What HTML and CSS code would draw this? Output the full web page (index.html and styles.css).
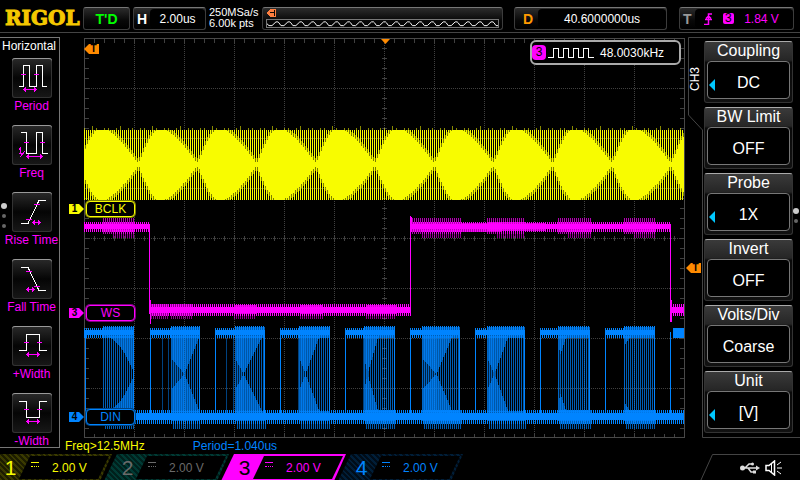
FILE: index.html
```html
<!DOCTYPE html>
<html lang="en">
<head>
<meta charset="utf-8">
<title>RIGOL oscilloscope</title>
<link rel="stylesheet" href="styles.css">
</head>
<body>
<svg class="defs" aria-hidden="true">
  <symbol id="flag" viewBox="0 0 15 10"><path fill="currentColor" d="M0 0H10L15 5L10 10H0Z"/></symbol>
  <symbol id="flag-left" viewBox="0 0 15 10"><path fill="currentColor" d="M15 0H5L0 5L5 10H15Z"/></symbol>
</svg>

<header class="topbar">
  <div class="logo">RIGOL</div>
  <button class="panel status">T'D</button>
  <button class="panel timebase"><b>H</b><span class="well">2.00us</span></button>
  <div class="sampling">250MSa/s<br>6.00k pts</div>
  <div class="panel memory">
    <svg class="memory-mark" viewBox="0 0 10 8" shape-rendering="crispEdges"><path d="M0 4L4 0H10V8H4Z" fill="#ff7f40"/><path d="M4 3.500H8M8.500 1V7" fill="none" stroke="#000"/></svg>
    <svg class="memory-wave" id="memory-wave" viewBox="0 0 232 8" preserveAspectRatio="none"></svg>
  </div>
  <button class="panel delay"><b>D</b><span class="well">40.6000000us</span></button>
  <button class="panel trigger"><b>T</b><span class="well">
    <svg class="edge" viewBox="0 0 9 12"><path d="M0 11.500H4.500V1H8M1 6.500H8M2 5.500L4.500 3L7 5.500" fill="none" stroke="currentColor" stroke-width="1.500"/></svg>
    <span class="source">3</span><span>1.84 V</span></span></button>
</header>

<main class="scope">
  <nav class="measures" aria-label="Horizontal measurements">
    <h2>Horizontal</h2>
    <span class="pager"><i></i><i></i><i></i></span>
    <button><svg viewBox="0 0 40 40"><path class="sig" d="M7 28.500H11.500V7.500H17.500V28.500H24.500V7.500H30.500V28.500H35"/><path class="mark" d="M9 16.500H14M22 16.500H27M12 31.500H24"/><path class="head" d="M11 31.500L14 29V34ZM25 31.500L22 29V34Z"/></svg><span>Period</span></button>
    <button><svg viewBox="0 0 40 40"><path class="sig" d="M9 7.500H14.500V28.500H24.500V7.500H30.500V28.500H36"/><path class="mark" d="M12 17.500H17M28 17.500H33M15 31.500H30M7 24.500L8.500 23V28M7 28.500H10M8 32L13 26"/><path class="head" d="M14 31.500L17 29V34ZM31 31.500L28 29V34Z"/></svg><span>Freq</span></button>
    <button><svg viewBox="0 0 40 40"><path class="sig" d="M9 31.500H16L27 8.500H34"/><path class="mark" d="M22 12.500H28M14 27.500H20M20 30.500H29"/><path class="head" d="M20 30.500L23 28V33ZM29 30.500L26 28V33Z"/></svg><span>Rise Time</span></button>
    <button><svg viewBox="0 0 40 40"><path class="sig" d="M9 8.500H16L27 31.500H34"/><path class="mark" d="M14 12.500H20M22 27.500H28M14 30.500H22"/><path class="head" d="M14 30.500L17 28V33ZM23 30.500L20 28V33Z"/></svg><span>Fall Time</span></button>
    <button><svg viewBox="0 0 40 40"><path class="sig" d="M7 24.500H14.500V8.500H27.500V24.500H35"/><path class="mark" d="M12 16.500H17M25 16.500H30M15 28.500H27"/><path class="head" d="M14 28.500L17 26V31ZM28 28.500L25 26V31Z"/></svg><span>+Width</span></button>
    <button><svg viewBox="0 0 40 40"><path class="sig" d="M7 8.500H14.500V24.500H27.500V8.500H35"/><path class="mark" d="M12 16.500H17M25 16.500H30M15 28.500H27"/><path class="head" d="M14 28.500L17 26V31ZM28 28.500L25 26V31Z"/></svg><span>-Width</span></button>
  </nav>

  <section class="display">
    <div class="plot">
      <svg id="graph" class="graph" viewBox="84 38 601 400" shape-rendering="crispEdges" role="img" aria-label="Waveforms"></svg>
      <span class="marker trigger-pos"><svg><use href="#flag-left"/></svg><b>T</b></span>
      <svg class="center-mark" viewBox="0 0 9 5"><path d="M0 0H9L4.500 5Z" fill="#ff8a00"/></svg>
      <div class="freq-counter"><span class="source">3</span>
        <svg viewBox="0 0 46 12" shape-rendering="crispEdges"><path d="M0 10.500H5.500V1.500H10.500V10.500H15.500V1.500H20.500V10.500H25.500V1.500H30.500V10.500H35.500V1.500H40.500V10.500H46" fill="none" stroke="#fff"/></svg>
        <span>48.0030kHz</span></div>
      <span class="marker zero ch1"><svg><use href="#flag"/></svg><b>1</b></span>
      <span class="marker zero ch3"><svg><use href="#flag"/></svg><b>3</b></span>
      <span class="marker zero ch4"><svg><use href="#flag"/></svg><b>4</b></span>
      <span class="tag ch1">BCLK</span>
      <span class="tag ch3">WS</span>
      <span class="tag ch4">DIN</span>
    </div>
    <div class="readouts"><span class="ch1">Freq&gt;12.5MHz</span><span class="ch4">Period=1.040us</span></div>
  </section>

  <aside class="menu">
    <svg class="outline" viewBox="0 0 115 401"><path d="M115 0.500H3.500V78L17.500 93V400.500H115" fill="none" stroke="#444"/></svg>
    <h2 class="menu-tab">CH3</h2>
    <span class="marker level"><svg><use href="#flag-left"/></svg><b>T</b></span>
    <button><span>Coupling</span><span class="value more">DC</span></button>
    <button><span>BW Limit</span><span class="value">OFF</span></button>
    <button><span>Probe</span><span class="value more">1X</span></button>
    <button><span>Invert</span><span class="value">OFF</span></button>
    <button><span>Volts/Div</span><span class="value">Coarse</span></button>
    <button><span>Unit</span><span class="value more">[V]</span></button>
    <span class="pager"><i></i><i></i></span>
  </aside>
</main>

<footer class="channels">
  <button class="channel ch1"><b>1</b><span class="scale"><i class="dc"></i>2.00 V</span></button>
  <button class="channel ch2"><b>2</b><span class="scale"><i class="dc"></i>2.00 V</span></button>
  <button class="channel ch3 active"><b>3</b><span class="scale"><i class="dc"></i>2.00 V</span></button>
  <button class="channel ch4"><b>4</b><span class="scale"><i class="dc"></i>2.00 V</span></button>
  <div class="system">
    <svg class="slant" viewBox="0 0 100 27"><path d="M0.500 27L12.500 0.500H100" fill="none" stroke="#444"/></svg>
    <svg class="usb" viewBox="0 0 20 12"><g fill="none" stroke="#ddd" stroke-width="1.500"><path d="M2 6H17M5 6L9 2H12M8 6L11 10H14"/></g><g fill="#ddd"><circle cx="2.500" cy="6" r="2.500"/><path d="M16 3.500L20 6L16 8.500Z"/><circle cx="12.500" cy="2" r="1.500"/><path d="M13 8.500H16V11.500H13Z"/></g></svg>
    <svg class="speaker" viewBox="0 0 18 16"><g fill="none" stroke="#fff"><path d="M1 5.500H4L9.500 1V15L4 10.500H1Z" stroke-width="1.500"/><path d="M6.500 4V12M12 5L16 2M12 8H17M12 11L16 14"/></g></svg>
  </div>
</footer>
<script src="scope.js"></script>
</body>
</html>
```
FILE: styles.css
```css
* { box-sizing: border-box; }

:root {
  --ch1: #f8fc00;
  --ch2: #6a6a6a;
  --ch3: #ff00ff;
  --ch4: #0084ff;
  --line: #444;
  --orange: #ff8a00;
}

body {
  margin: 0;
  min-height: 100vh;
  display: flex;
  flex-direction: column;
  background: #000;
  color: #fff;
  font: 12px/14px "Liberation Sans", Arial, sans-serif;
  overflow: hidden;
}

button {
  font: inherit;
  color: inherit;
  background: none;
  border: 0;
  padding: 0;
}

h2 { margin: 0; font: inherit; }
svg { display: block; }
.defs { position: absolute; width: 0; height: 0; }

.ch1 { color: var(--ch1); }
.ch2 { color: var(--ch2); }
.ch3 { color: var(--ch3); }
.ch4 { color: var(--ch4); }

/* Top bar */
.topbar {
  height: 33px;
  display: flex;
  align-items: flex-start;
  padding: 7px 6px 0 5px;
  border-bottom: 1px solid var(--line);
}
.logo {
  width: 78px;
  font: bold 20px/22px "DejaVu Serif", serif;
  color: #f5c800;
  -webkit-text-stroke: 1px #f5c800;
}
.panel {
  height: 23px;
  display: flex;
  align-items: center;
  border: 1px solid #3c3c3c;
  border-top-color: #777;
  border-radius: 3px;
  background: linear-gradient(#2c2c2c, #080808 60%, #000);
}
.status {
  width: 47px;
  justify-content: center;
  margin-right: 3px;
  color: #0f0;
  font-weight: bold;
  font-size: 14px;
}
.panel b { font-size: 14px; padding-left: 3px; }
.well {
  flex: 1;
  height: 19px;
  display: flex;
  align-items: center;
  justify-content: center;
  border-radius: 4px;
  background: #000;
}
.timebase { width: 73px; margin-right: 3px; }
.timebase .well { margin-left: 3px; }
.sampling { width: 53px; font-size: 11px; line-height: 11px; white-space: nowrap; }
.memory {
  flex: 1;
  flex-direction: column;
  align-items: stretch;
  padding: 1px 3px;
  margin-right: 11px;
}
.memory-mark { width: 10px; height: 8px; margin-bottom: 2px; }
.memory-wave { width: 100%; height: 10px; border: 1px solid #777; }
.delay { width: 153px; margin-right: 12px; }
.delay b { color: #ff9a00; padding: 0 5px 0 8px; }
.trigger { width: 115px; }
.trigger b { color: #999; margin-right: 3px; }
.trigger .well { color: var(--ch3); justify-content: space-around; padding: 0 9px 0 4px; }
.edge { width: 9px; height: 12px; }
.trigger .source {
  width: 11px;
  height: 11px;
  line-height: 11px;
  border-radius: 2px;
  background: var(--ch3);
  color: #000;
  text-align: center;
}

/* Work area */
.scope {
  flex: 1;
  display: grid;
  grid-template-columns: 60px 1fr 115px;
  align-items: start;
}

.measures {
  position: relative;
  margin-top: 4px;
  height: 411px;
  padding-left: 4px;
  border: 1px solid #777;
  border-left: 0;
}
.measures h2 { height: 20px; line-height: 17px; margin-left: -2px; }
.measures button {
  width: 100%;
  height: 67px;
  display: flex;
  flex-direction: column;
  align-items: center;
  white-space: nowrap;
  color: var(--ch3);
}
.measures button svg {
  width: 40px;
  height: 40px;
  margin-bottom: 1px;
  border-radius: 3px;
  box-shadow: inset 0 1px #999, inset 0 0 0 1px #333;
  background: linear-gradient(#2a2a2a, #050505 50%, #181818);
  shape-rendering: crispEdges;
}
.sig { fill: none; stroke: #fff; }
.mark { fill: none; stroke: var(--ch3); }
.head { fill: var(--ch3); stroke: none; }

.pager {
  position: absolute;
  display: flex;
  flex-direction: column;
  align-items: center;
  gap: 6px;
  width: 6px;
}
.pager i { width: 4px; height: 4px; border-radius: 50%; background: #666; }
.pager i:first-child { width: 6px; height: 6px; margin-bottom: -1px; background: #ccc; }
.measures .pager { left: 1px; top: 165px; }
.menu .pager { right: 1px; top: 171px; }

/* Plot */
.display { padding: 5px 0 0 24px; }
.plot { position: relative; }
.graph { width: 100%; }

.marker {
  position: absolute;
  width: 15px;
  height: 10px;
}
.marker svg { width: 15px; height: 10px; }
.marker b {
  position: absolute;
  inset: 0 4px 0 0;
  color: #000;
  font-size: 10px;
  line-height: 10px;
  text-align: center;
}
.trigger-pos { left: 0; top: 6px; color: var(--orange); }
.trigger-pos b, .level b { inset: 0 0 0 4px; }
.level { left: 1px; top: 226px; color: var(--orange); }
.zero { left: -15px; }
.zero.ch1, .tag.ch1 { top: 166px; }
.zero.ch3, .tag.ch3 { top: 270px; }
.zero.ch4, .tag.ch4 { top: 374px; }

.center-mark { position: absolute; left: calc(50% - 4px); top: 1px; width: 9px; height: 5px; }

.tag {
  position: absolute;
  left: 2px;
  width: 49px;
  height: 16px;
  margin-top: -3px;
  border: 1px solid;
  border-radius: 4px;
  box-shadow: 0 0 0 1px color-mix(in srgb, currentColor 50%, #000);
  background: #000;
  text-align: center;
  line-height: 15px;
}

.freq-counter {
  position: absolute;
  right: 4px;
  top: 2px;
  width: 151px;
  height: 25px;
  display: flex;
  align-items: center;
  border: 2px solid #aaa;
  border-radius: 6px;
  background: #000;
}
.freq-counter .source {
  width: 14px;
  height: 15px;
  margin-right: 2px;
  line-height: 15px;
  border-radius: 4px;
  background: var(--ch3);
  color: #000;
  text-align: center;
}
.freq-counter svg { width: 46px; height: 12px; margin-right: 6px; }

.readouts { display: flex; gap: 48px; margin-left: -19px; line-height: 16px; }

/* Soft-key menu */
.menu {
  position: relative;
  margin-top: 4px;
  padding: 4px 7px 0 19px;
  display: flex;
  flex-direction: column;
  gap: 4px;
  font-size: 16px;
}
.outline { position: absolute; left: 0; top: 0; width: 115px; height: 401px; }
.menu-tab {
  position: absolute;
  left: 4px;
  top: 30px;
  font-size: 12px;
  line-height: 12px;
  writing-mode: vertical-rl;
  transform: rotate(180deg);
}
.menu button {
  position: relative;
  height: 62px;
  padding: 0 3px;
  border: 1px solid #333;
  border-top-color: #aaa;
  border-radius: 3px;
  background: linear-gradient(#3a3a3a, #262626 30%, #0a0a0a 34%, #111);
}
.menu button span { display: block; height: 18px; line-height: 18px; }
.menu button .value {
  height: 38px;
  margin: 1px -1px 3px;
  line-height: 42px;
  border: 1px solid #777;
  border-radius: 4px;
  background: #000;
}
.more::before {
  content: "";
  position: absolute;
  left: 4px;
  top: 37px;
  border: solid transparent;
  border-width: 6px 6px 6px 0;
  border-right-color: #00c8ff;
}

/* Channel strip */
.channels {
  height: 27px;
  display: flex;
  margin-left: -13px;
}
.channel {
  width: 125px;
  margin-right: -8px;
  padding: 2px 3px 2px 15px;
  display: flex;
  align-items: center;
  clip-path: polygon(13px 0, 100% 0, calc(100% - 12px) 100%, 0 100%);
  background: repeating-linear-gradient(45deg, var(--base) 0 2px, var(--tint) 2px 4px);
}
.channel.ch1 { --base: #1c1c00; --tint: #3a3a00; }
.channel.ch2 { --base: #00201c; --tint: #003a34; }
.channel.ch4 { --base: #000c18; --tint: #001e38; }
.channel.active { background: var(--ch3); }
.channel b { width: 17px; font-weight: normal; font-size: 21px; }
.channel.active b { color: #000; }
.scale {
  flex: 1;
  height: 23px;
  display: flex;
  align-items: center;
  gap: 13px;
  padding-left: 12px;
  clip-path: polygon(11px 0, 100% 0, calc(100% - 11px) 100%, 0 100%);
  background: #000;
}
.dc {
  width: 8px;
  height: 5px;
  margin-bottom: 6px;
  border-top: 1px solid;
  border-bottom: 1px dotted;
}
.system {
  position: relative;
  flex: 1;
  display: flex;
  align-items: center;
  justify-content: flex-end;
  gap: 5px;
  padding-right: 17px;
}
.slant { position: absolute; right: 0; top: 0; width: 100px; height: 27px; }
.usb { width: 20px; height: 12px; }
.speaker { width: 18px; height: 16px; }
```
FILE: scope.js
```js
const graph = document.getElementById("graph");
const parts = [];

function path(d, color, opacity = 1) {
  parts.push(`<path d="${d}" fill="${color}" fill-opacity="${opacity}"/>`);
}
const box = (x, y, w, h) => `M${x} ${y}h${w}v${h}h${-w}z`;

// Comb of one-pixel columns between two heights
function comb(x0, x1, top, bottom, step = 2) {
  let d = "";
  for (let x = x0; x < x1; x += step) {
    const t = typeof top === "function" ? top(x) : top;
    const b = typeof bottom === "function" ? bottom(x) : bottom;
    if (b > t) d += box(x, Math.round(t), 1, Math.round(b - t));
  }
  return d;
}

// Graticule: dotted divisions, ticks every fifth of a division
let grid = "";
for (let x = 134; x < 684; x += 50) {
  for (let y = 39; y < 437; y += 2) grid += box(x, y, 1, 1);
}
for (let y = 88; y < 438; y += 50) {
  for (let x = 85; x < 684; x += 2) grid += box(x, y, 1, 1);
}
for (let x = 94; x < 684; x += 10) grid += box(x, 39, 1, 4) + box(x, 434, 1, 3) + box(x, 236, 1, 5);
for (let y = 48; y < 437; y += 10) grid += box(85, y, 4, 1) + box(680, y, 4, 1) + box(382, y, 5, 1);
path(grid, "#404040");
path(box(84, 38, 601, 1) + box(84, 437, 601, 1) + box(84, 38, 1, 400) + box(684, 38, 1, 400), "#484848");

// Channel 1: bit clock, beating against the sample rate
const beat = 59.2, firstPinch = 138;
function envelope(x) {
  const p = (((x - firstPinch) / beat) % 1 + 1) % 1;
  const h = p < 0.38
    ? Math.sin(Math.PI / 2 * p / 0.38)
    : 1 - Math.pow((p - 0.38) / 0.62, 1.5);
  return Math.max(2, h * 36);
}
path(comb(84, 684, 130, 200), "#f8fc00");
path(comb(84, 684, x => Math.max(130, 160 - envelope(x)), x => Math.min(200, 169 + envelope(x)), 1), "#f8fc00", 0.5);
path(comb(84, 684, x => Math.max(130, 164 - envelope(x)), x => Math.min(200, 165 + envelope(x)), 1), "#f8fc00");
let spikes = "";
for (let x = 84; x < 684; x += 6) {
  const tall = x % 5 === 0;
  spikes += box(x + (x * 7) % 4, tall ? 126 : 128, 1, tall ? 4 : 2);
}
path(spikes, "#f8fc00", 0.55);

// Channel 3: word select
const ws = "#ff00ff";
for (const [a, b] of [[84, 150], [411, 671]]) {
  path(box(a, 224, b - a, 5) + comb(a, b, 222, 232), ws);
}
for (const [a, b] of [[103, 135], [412, 461], [487, 525], [558, 591], [624, 655]]) {
  path(comb(a, b, 218, 234), ws, 0.7);
  path(comb(a + 1, b, 222, 231), ws, 0.8);
  path(comb(a + 10, b, 230, 238), ws, 0.55);
}
path(box(461, 223, 40, 9) + box(525, 223, 20, 8), ws, 0.7);
for (const [a, b] of [[150, 411], [671, 684]]) {
  path(box(a, 307, b - a, 6) + comb(a, b, 304, 316), ws);
}
for (const [a, b] of [[151, 168], [171, 192], [234, 256], [300, 323], [366, 396]]) {
  path(comb(a, b, 304, 319), ws, 0.55);
  path(comb(a + 1, b, 305, 314), ws, 0.8);
}
path(box(149, 224, 1, 90) + box(150, 300, 1, 24) + box(410, 216, 1, 96) + box(411, 217, 1, 10) + box(670, 226, 1, 96) + box(671, 300, 1, 22), ws);

// Channel 4: serial data. from..apex is the dense zone, reach is where it fades out
const din = "#0084ff";
const packets = [
  { start: 84, end: 134, from: 103, apex: 134, reach: 134 },
  { start: 150, end: 200, from: 171, apex: 184, reach: 199, faint: [162, 168] },
  { start: 215, end: 265, from: 235, apex: 243, reach: 262, faint: [226, 233] },
  { start: 280, end: 330, from: 299, apex: 305, reach: 319, faint: [298] },
  { start: 345, end: 395, from: 364, apex: 367, reach: 378, faint: [363] },
  { start: 410, end: 460, from: 422, apex: 436, reach: 452 },
  { start: 475, end: 525, from: 487, apex: 494, reach: 508 },
  { start: 540, end: 590, from: 558, apex: 560, reach: 566, depth: 18 },
  { start: 605, end: 655, from: 624, apex: 625, reach: 630, depth: 8 }
];
path(box(135, 413, 549, 7) + comb(135, 684, 410, 424), din);
for (const p of packets) {
  const depth = p.depth || 38;
  const wedge = x => x < p.apex
    ? depth * (0.6 + 0.4 * (x - p.from) / (p.apex - p.from))
    : depth * Math.max(0, 1 - (x - p.apex) / (p.reach - p.apex));
  const ramp = x => depth * Math.pow((x - p.from) / (p.end - p.from), 2);
  const height = p.apex === p.end ? ramp : wedge;
  path(box(p.start, 330, p.end - p.start, 5) + comb(p.start, p.from, 328, 338) + comb(p.from, p.end, 326, 338), din);
  path(comb(p.from, p.end, 327, 338, 1), din, 0.7);
  path(comb(p.from, p.end, 338, 412), din, 0.7);
  path(comb(p.from + 1, Math.min(p.end, p.reach), () => 336, x => 336 + height(x), 1), din, 0.65);
  path(comb(p.from + 1, Math.min(p.end, p.reach), x => 412 - height(x), () => 412, 1), din, 0.65);
  if (p.apex < p.end) path(box(p.from, 338, p.apex - p.from, 74), din, 0.25);
  path(comb(p.from + 2, p.end + 1, 410, 429), din, 0.7);
  path(box(p.from, 411, p.end - p.from, 10), din, 0.7);
  path(box(p.start + (p.start > 84 ? 0 : 1), 332, 1, 82) + box(p.end - 1, 332, 1, 82), din);
  for (const x of p.faint || []) path(box(x, 338, 1, 76), din, 0.5);
}
path(box(670, 332, 1, 82) + box(673, 328, 11, 10), din);

graph.innerHTML = parts.join("");

// Memory overview waveform
let wave = "M0 4";
for (let x = 0; x < 232; x += 12) wave += `L${x + 2} 6H${x + 5}L${x + 9} 2H${x + 11}L${x + 12} 3`;
document.getElementById("memory-wave").innerHTML = `<path d="${wave}" fill="none" stroke="#fff"/>`;
```
